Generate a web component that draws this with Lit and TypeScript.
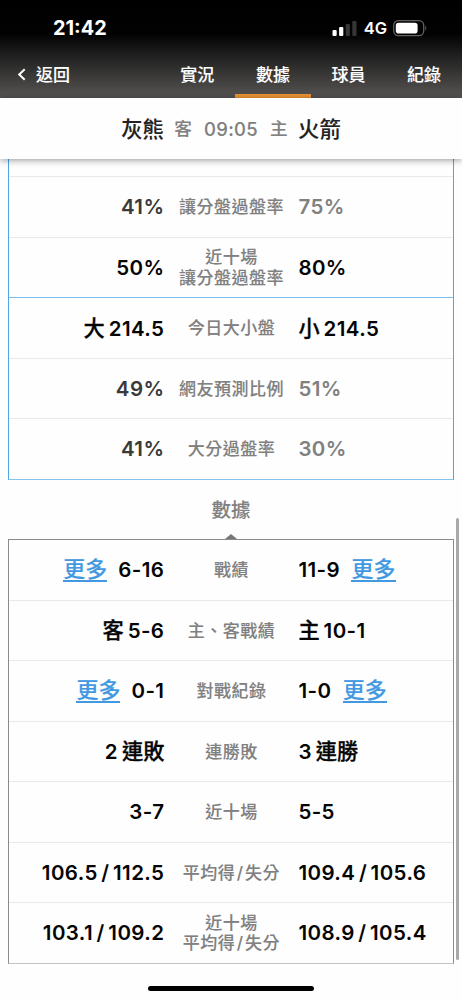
import { LitElement, html, css, svg } from "lit";
import { customElement, property } from "lit/decorators.js";

type Part = { text: string; kind: "num" | "han" | "link" };
type Tone = "strong" | "dim" | "muted";
type Row = { away: Part[]; label: string[]; home: Part[]; awayTone?: Tone; homeTone?: Tone; rule?: boolean };

const num = (text: string): Part => ({ text, kind: "num" });
const han = (text: string): Part => ({ text, kind: "han" });
const more: Part = { text: "更多", kind: "link" };

const odds: Row[] = [
  { away: [num("41%")], label: ["讓分盤過盤率"], home: [num("75%")], awayTone: "dim", homeTone: "muted" },
  { away: [num("50%")], label: ["近十場", "讓分盤過盤率"], home: [num("80%")], rule: true },
  { away: [han("大"), num("214.5")], label: ["今日大小盤"], home: [han("小"), num("214.5")] },
  { away: [num("49%")], label: ["網友預測比例"], home: [num("51%")], awayTone: "dim", homeTone: "muted" },
  { away: [num("41%")], label: ["大分過盤率"], home: [num("30%")], awayTone: "dim", homeTone: "muted" },
];

const stats: Row[] = [
  { away: [more, num("6-16")], label: ["戰績"], home: [num("11-9"), more] },
  { away: [han("客"), num("5-6")], label: ["主、客戰績"], home: [han("主"), num("10-1")] },
  { away: [more, num("0-1")], label: ["對戰紀錄"], home: [num("1-0"), more] },
  { away: [num("2"), han("連敗")], label: ["連勝敗"], home: [num("3"), han("連勝")] },
  { away: [num("3-7")], label: ["近十場"], home: [num("5-5")] },
  { away: [num("106.5 / 112.5")], label: ["平均得/失分"], home: [num("109.4 / 105.6")] },
  { away: [num("103.1 / 109.2")], label: ["近十場", "平均得/失分"], home: [num("108.9 / 105.4")] },
];

@customElement("stat-row")
class StatRow extends LitElement {
  @property({ attribute: false }) row!: Row;

  static styles = css`
    :host {
      display: grid;
      grid-template-columns: 155.4px 134px 1fr;
      align-items: center;
      height: 60.5px;
      box-sizing: border-box;
    }
    .side {
      display: flex;
      align-items: baseline;
      gap: 4px;
      font-weight: 600;
      font-size: 20.5px;
      line-height: 26px;
      white-space: nowrap;
      color: #050505;
    }
    .away { justify-content: flex-end; }
    .dim { color: #3a3a3a; }
    .muted { color: #808080; }
    .num { letter-spacing: 0.4px; word-spacing: -2px; }
    .han { font-size: 21.2px; font-weight: 500; -webkit-text-stroke: 0.3px currentColor; }
    .link {
      font-size: 22px;
      font-weight: 500;
      color: #4299e1;
      -webkit-text-stroke: 0.15px currentColor;
      border-bottom: 2px solid #4299e1;
      line-height: 21px;
    }
    .away .link { margin-right: 7px; }
    .home .link { margin-left: 7.5px; }
    .label {
      text-align: center;
      font-size: 17px;
      letter-spacing: 0.5px;
      line-height: 20.5px;
      color: #808080;
      -webkit-text-stroke: 0.1px currentColor;
      white-space: nowrap;
    }
    .line { display: block; }
    .slash { padding: 0 1.4px; }
  `;

  private side(parts: Part[], cls: string, tone: Tone = "strong") {
    return html`<div class="side ${cls} ${tone}">${parts.map((p) => html`<span class=${p.kind}>${p.text}</span>`)}</div>`;
  }

  private line(text: string) {
    const [head, tail] = text.split("/");
    return html`<span class="line">${head}${tail ? html`<span class="slash">/</span>${tail}` : ""}</span>`;
  }

  render() {
    const r = this.row;
    return html`${this.side(r.away, "away", r.awayTone)}
      <div class="label">${r.label.map((l) => this.line(l))}</div>
      ${this.side(r.home, "home", r.homeTone)}`;
  }
}

@customElement("app-root")
class AppRoot extends LitElement {
  static styles = css`
    :host {
      display: flex;
      flex-direction: column;
      position: relative;
      width: 462px;
      height: 1000px;
      overflow: hidden;
      background: #fefefe;
      font-family: Inter, "Noto Sans CJK TC", sans-serif;
      font-weight: 500;
    }
    .top {
      height: 98px;
      flex: none;
      display: flex;
      flex-direction: column;
      color: #fff;
      background: linear-gradient(#000 0, #020202 34px, #202020 56px, #575553 98px);
    }
    .status {
      height: 54px;
      box-sizing: border-box;
      padding: 2px 34px 0 53px;
      display: flex;
      align-items: center;
      justify-content: space-between;
    }
    .time { font-size: 19.9px; font-weight: 700; }
    .signals { display: flex; align-items: center; }
    .network { font-size: 16.5px; font-weight: 600; margin: 0 6px 0 7px; }
    svg { display: block; }
    .nav { flex: 1; display: flex; font-size: 17px; line-height: 24px; -webkit-text-stroke: 0.1px currentColor; }
    .back { width: 159.5px; display: flex; padding: 9px 0 0 17px; box-sizing: border-box; gap: 9px; }
    .back svg { margin-top: 5px; }
    .tab { width: 75.6px; flex: none; box-sizing: border-box; text-align: center; padding-top: 9px; border-bottom: 4px solid transparent; }
    .active { border-bottom-color: #ef9634; }
    .match {
      height: 60.5px;
      box-sizing: border-box;
      padding-top: 1px;
      flex: none;
      display: flex;
      align-items: center;
      justify-content: center;
      background: #fefefe;
      box-shadow: 0 1px 7px rgba(0, 0, 0, 0.42);
      z-index: 1;
      color: #808080;
      font-size: 17.6px;
      line-height: 26px;
      -webkit-text-stroke: 0.1px currentColor;
    }
    .team { font-size: 21.4px; color: #222; }
    .clock { font-size: 18.4px; letter-spacing: 0.3px; margin: 0 12.2px; }
    .place-a { margin-left: 10.3px; }
    .place-h { margin-right: 10.3px; }
    .content { padding: 0 8px; }
    .table { border: 1px solid #8a8a8a; border-bottom-color: #c2c2c2; }
    .odds { border-color: #4fa5e8; border-top: 0; border-bottom-color: #85c3ef; }
    .lead { height: 17.6px; }
    .entry { border-top: 1px solid #e9e9e9; height: 60.5px; box-sizing: border-box; }
    .rule + .entry { border-top-color: #7fbff0; }
    .stats .entry:first-child { border-top-color: transparent; margin-top: -1px; }
    .title {
      height: 59.6px;
      display: flex;
      flex-direction: column;
      align-items: center;
      box-sizing: border-box;
      padding-top: 16.5px;
      font-size: 19.4px;
      line-height: 28px;
      color: #808080;
      -webkit-text-stroke: 0.1px currentColor;
    }
    .caret { margin-top: auto; }
    .scroll { position: absolute; left: 456px; top: 518px; width: 3px; height: 442px; border-radius: 2px; background: #a9a9a9; }
    .home-bar { position: absolute; left: 148px; top: 986px; width: 166px; height: 5px; border-radius: 3px; background: #000; }
  `;

  private entries(rows: Row[]) {
    return rows.map((r) => html`<div class="entry ${r.rule ? "rule" : ""}"><stat-row .row=${r}></stat-row></div>`);
  }

  render() {
    const bars = [6, 9, 12, 15].map(
      (h, i) => svg`<rect x=${0.5 + i * 6.6} y=${15 - h} width="4.2" height=${h} rx="1" fill=${i < 2 ? "#fff" : "#363636"}/>`
    );
    return html`
      <header class="top">
        <div class="status">
          <span class="time">21:42</span>
          <div class="signals">
            <svg width="25" height="15">${bars}</svg>
            <span class="network">4G</span>
            <svg width="35" height="17" viewBox="0 0 35 17">
              <rect x="0.7" y="0.7" width="30" height="15" rx="4.6" fill="none" stroke="#606060" stroke-width="1.3" />
              <rect x="2.8" y="2.8" width="21.8" height="10.8" rx="2.8" fill="#fff" />
              <path d="M32.3 5.6q2 2.6 0 5.2z" fill="#606060" />
            </svg>
          </div>
        </div>
        <nav class="nav">
          <div class="back">
            <svg width="10" height="13" viewBox="0 0 10 13"><path d="M7.7 1.2 2.2 6.5l5.5 5.3" fill="none" stroke="#fff" stroke-width="2" /></svg>
            <span>返回</span>
          </div>
          ${["實況", "數據", "球員", "紀錄"].map((t, i) => html`<div class="tab ${i === 1 ? "active" : ""}">${t}</div>`)}
        </nav>
      </header>
      <div class="match">
        <span class="team">灰熊</span><span class="place-a">客</span><span class="clock">09:05</span
        ><span class="place-h">主</span><span class="team">火箭</span>
      </div>
      <main class="content">
        <section class="table odds"><div class="lead"></div>${this.entries(odds)}</section>
        <div class="title">
          <span>數據</span>
          <svg class="caret" width="12" height="5"><path d="M0 5 6 0l6 5z" fill="#777" /></svg>
        </div>
        <section class="table stats">${this.entries(stats)}</section>
      </main>
      <div class="scroll"></div>
      <div class="home-bar"></div>
    `;
  }
}
